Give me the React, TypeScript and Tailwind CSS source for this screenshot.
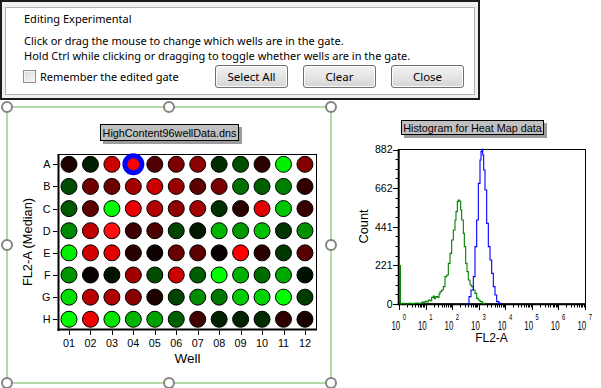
import React from "react";

const ROWS = ["A", "B", "C", "D", "E", "F", "G", "H"];
const COLORS: string[][] = [
  ["#1c0000", "#001e00", "#cc0000", "#ff0000", "#500000", "#7c0000", "#8c0000", "#002c00", "#004e00", "#2c0000", "#00f000", "#840000"],
  ["#004c00", "#700000", "#6c0000", "#a40000", "#cc0000", "#980000", "#5c0000", "#780000", "#007000", "#006000", "#008000", "#300000"],
  ["#005800", "#5c0000", "#00ff00", "#e80000", "#b00000", "#900000", "#a00000", "#003000", "#280000", "#e00000", "#00c800", "#380000"],
  ["#008800", "#c00000", "#ff1010", "#3c0000", "#4c0000", "#004400", "#001800", "#00b400", "#009800", "#00c000", "#003400", "#009000"],
  ["#00ee00", "#d00000", "#e00000", "#280000", "#0c0000", "#680000", "#5c0000", "#080000", "#ff0000", "#280000", "#003800", "#580000"],
  ["#009400", "#080000", "#001400", "#a00000", "#004c00", "#cc0000", "#005c00", "#00ff00", "#00b000", "#006c00", "#00a800", "#001000"],
  ["#00e000", "#b80000", "#b00000", "#880000", "#1c0000", "#004400", "#008c00", "#007800", "#00cc00", "#00d400", "#00ff00", "#003c00"],
  ["#00ff00", "#ee0000", "#00e400", "#00b400", "#00a000", "#006000", "#400000", "#002000", "#002400", "#002c00", "#300000", "#180000"],
];

const CHART_FONT = "'Liberation Sans', Arial, sans-serif";

function stepPath(pts: [number, number][]) {
  let d = `M${pts[0][0]} ${pts[0][1]}`;
  for (let i = 1; i < pts.length; i++) d += ` H${pts[i][0].toFixed(2)} V${pts[i][1].toFixed(2)}`;
  return d;
}

const toPx = (p: [number, number][]): [number, number][] => p.map(([sx, sy]) => [395 + sx / 3, 140 + sy / 3]);

const BLUE = toPx([
  [215, 492], [222, 470], [228, 450], [235, 410], [240, 320], [245, 240], [250, 130], [255, 60], [258, 35], [261, 28],
  [263, 45], [266, 90], [270, 150], [275, 250], [280, 320], [285, 360], [290, 400], [295, 440], [300, 465], [305, 485],
  [312, 490], [318, 492],
]);

const GREEN = toPx([
  [14, 492], [20, 490], [30, 492], [40, 490], [50, 491], [60, 489], [70, 490], [80, 486], [85, 488], [90, 484], [95, 486],
  [100, 480], [105, 482], [110, 472], [115, 468], [118, 476], [122, 470], [128, 472], [132, 462], [135, 455], [140, 450],
  [145, 440], [150, 410], [155, 405], [160, 370], [165, 340], [170, 300], [175, 270], [180, 240], [183, 215], [187, 185],
  [190, 180], [193, 183], [197, 210], [200, 240], [205, 280], [208, 320], [212, 370], [216, 395], [220, 420], [225, 435],
  [230, 440], [235, 450], [240, 460], [245, 475], [250, 480], [255, 485], [262, 490], [270, 492],
]);

function Handle({ cls }: { cls: string }) {
  return <div className={`absolute w-3 h-3 rounded-full border-2 border-[#848484] bg-white ${cls}`} />;
}

function HeatMap() {
  const cx = (i: number) => 69 + i * 21.45;
  const cy = (j: number) => 164.3 + j * 22.14;
  return (
    <div className="relative w-[326px] h-[278px] border-2 border-[#b4d8a6] shrink-0">
      <svg width={322} height={274} className="block overflow-visible">
        <g transform="translate(-8 -108)" fontFamily={CHART_FONT}>
          <rect x={103} y={127} width={139} height={17} fill="#9c9c9c" />
          <rect x={100.5} y={124.5} width={138} height={16} fill="#c0c0c0" stroke="#000" />
          <text x={169.5} y={136.5} fontSize={10.8} textAnchor="middle" fill="#000">HighContent96wellData.dns</text>

          <rect x={58.5} y={154.5} width={258} height={175} fill="#fff" stroke="#000" />
          <line x1={58.5} y1={154} x2={58.5} y2={331} stroke="#000" strokeWidth={2} />
          <line x1={57.5} y1={329.5} x2={317} y2={329.5} stroke="#000" strokeWidth={2} />

          {ROWS.map((r, j) => (
            <g key={r}>
              <text x={50.5} y={cy(j) + 4} fontSize={10.8} textAnchor="end" fill="#000">{r}</text>
              <line x1={53} y1={Math.round(cy(j)) + 0.5} x2={57.5} y2={Math.round(cy(j)) + 0.5} stroke="#000" />
            </g>
          ))}
          {Array.from({ length: 12 }).map((_, i) => (
            <g key={i}>
              <line x1={Math.round(cx(i)) + 0.5} y1={330.5} x2={Math.round(cx(i)) + 0.5} y2={335} stroke="#000" />
              <text x={cx(i)} y={347} fontSize={10.8} textAnchor="middle" fill="#000">
                {String(i + 1).padStart(2, "0")}
              </text>
            </g>
          ))}

          {COLORS.map((row, j) =>
            row.map((c, i) =>
              j === 0 && i === 3 ? (
                <circle key={`${i}-${j}`} cx={cx(i)} cy={cy(j)} r={8.5} fill="#ff0000" stroke="#0000ff" strokeWidth={5} />
              ) : (
                <circle key={`${i}-${j}`} cx={cx(i)} cy={cy(j)} r={8} fill={c} stroke="#000" strokeWidth={1} />
              )
            )
          )}

          <text x={187.5} y={363} fontSize={13.5} textAnchor="middle" fill="#000">Well</text>
          <text x={31.5} y={242} fontSize={12.8} textAnchor="middle" fill="#000" transform="rotate(-90 31.5 242)">
            FL2-A (Median)
          </text>
        </g>
      </svg>
      <Handle cls="-left-[7px] -top-[7px]" />
      <Handle cls="left-[155px] -top-[7px]" />
      <Handle cls="left-[317px] -top-[7px]" />
      <Handle cls="-left-[7px] top-[131px]" />
      <Handle cls="left-[317px] top-[131px]" />
      <Handle cls="-left-[7px] top-[269px]" />
      <Handle cls="left-[155px] top-[269px]" />
      <Handle cls="left-[317px] top-[269px]" />
    </div>
  );
}

function Histogram() {
  const x0 = 399;
  const dec = 26.57;
  const yT = (v: number) => 304 - (v / 882) * 154.5;
  const yTicks = Array.from({ length: 17 }).map((_, k) => 304 - k * (154.5 / 16));
  const labels = [
    { v: 882, y: 149.5 },
    { v: 662, y: yT(662) },
    { v: 441, y: yT(441) },
    { v: 221, y: yT(221) },
    { v: 0, y: 304 },
  ];
  const xMinor: number[] = [];
  for (let d = 0; d < 7; d++) for (let k = 2; k <= 9; k++) xMinor.push(x0 + (d + Math.log10(k)) * dec);
  return (
    <div className="w-[269px] h-[278px] shrink-0">
      <svg width={269} height={278} className="block overflow-visible">
        <g transform="translate(-332 -106)" fontFamily={CHART_FONT}>
          <rect x={404} y={123} width={143} height={15} fill="#9c9c9c" />
          <rect x={401.5} y={120.5} width={142} height={14} fill="#c0c0c0" stroke="#000" />
          <text x={472.5} y={131.5} fontSize={10.8} textAnchor="middle" fill="#000">Histogram for Heat Map data</text>

          <rect x={398.5} y={149.5} width={187} height={154.5} fill="#fff" stroke="#000" />
          <line x1={398.7} y1={149} x2={398.7} y2={305.3} stroke="#000" strokeWidth={2} />
          <line x1={397.7} y1={304.3} x2={586} y2={304.3} stroke="#000" strokeWidth={2} />

          {yTicks.map((y, k) => (
            <line key={k} x1={k % 4 === 0 ? 393 : 395.5} y1={Math.round(y) + 0.5} x2={398} y2={Math.round(y) + 0.5} stroke="#000" />
          ))}
          {labels.map((l) => (
            <text key={l.v} x={392.5} y={l.y + 3.8} fontSize={10.5} textAnchor="end" fill="#000">{l.v}</text>
          ))}

          {xMinor.map((x, k) => (
            <line key={k} x1={Math.round(x) + 0.5} y1={305} x2={Math.round(x) + 0.5} y2={307.5} stroke="#000" />
          ))}
          {Array.from({ length: 8 }).map((_, d) => {
            const x = x0 + d * dec;
            return (
              <g key={d}>
                <line x1={Math.round(x) + 0.5} y1={305} x2={Math.round(x) + 0.5} y2={310} stroke="#000" />
                <text transform={`translate(${(x - 7.6).toFixed(2)} 329.5) scale(0.62 1)`} fontSize={12.8} fill="#000">
                  10
                  <tspan dx={4} dy={-9.5} fontSize={9.5}>{d}</tspan>
                </text>
              </g>
            );
          })}

          <line x1={400.2} y1={265} x2={400.2} y2={304} stroke="#008000" strokeWidth={1.5} />
          <path d={stepPath(GREEN)} fill="none" stroke="#008000" strokeWidth={1.1} />
          <path d={stepPath(BLUE)} fill="none" stroke="#0000ff" strokeWidth={1.1} />

          <text x={491.5} y={341.7} fontSize={12} textAnchor="middle" fill="#000">FL2-A</text>
          <text x={367.5} y={226.5} fontSize={12.8} textAnchor="middle" fill="#000" transform="rotate(-90 367.5 226.5)">
            Count
          </text>
        </g>
      </svg>
    </div>
  );
}

function WinButton({ label }: { label: string }) {
  return (
    <button className="w-[73px] h-[23px] rounded-[3px] border border-[#707070] bg-gradient-to-b from-[#f2f2f2] via-[#e6e6e6] to-[#d4d4d4] text-[11.5px] text-black leading-none flex items-center justify-center shadow-[inset_0_0_0_1px_#fcfcfc]">
      {label}
    </button>
  );
}

export default function App() {
  return (
    <div
      className="w-[601px] h-[388px] bg-white overflow-hidden flex flex-col"
      style={{ fontFamily: "'Noto Sans', 'Open Sans', sans-serif" }}
    >
      <div className="w-[480px] h-[100px] border-2 border-[#1c1c1c] bg-[#f0f0f0] shrink-0">
        <div className="mt-[5px] ml-[3px] w-[470px] h-[88px] border border-[#b0b0b0] bg-white pl-[18px] pt-[3px] text-[11px] text-black">
          <div className="leading-[16px]">Editing Experimental</div>
          <div className="mt-[6px] leading-[15px]">Click or drag the mouse to change which wells are in the gate.</div>
          <div className="leading-[15px]">Hold Ctrl while clicking or dragging to toggle whether wells are in the gate.</div>
          <div className="mt-[2px] flex items-center h-[23px]">
            <div className="w-[192px] flex items-center -ml-[1px]">
              <div className="w-[13px] h-[13px] border border-[#8e8f8f] bg-gradient-to-br from-[#d8d8d8] to-[#f8f8f8] shadow-[inset_0_0_0_1px_#f4f4f4]" />
              <span className="ml-[4px] leading-none">Remember the edited gate</span>
            </div>
            <div className="flex gap-[15px]">
              <WinButton label="Select All" />
              <WinButton label="Clear" />
              <WinButton label="Close" />
            </div>
          </div>
        </div>
      </div>
      <div className="flex mt-[6px] ml-[6px]">
        <HeatMap />
        <Histogram />
      </div>
    </div>
  );
}
